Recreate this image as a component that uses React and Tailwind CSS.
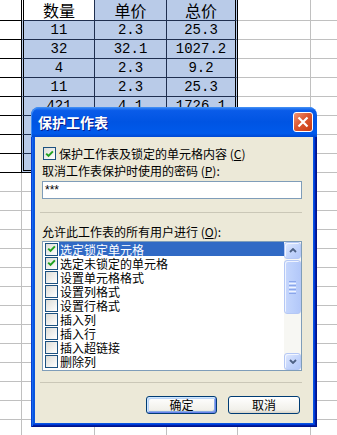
import React from "react";

const CJK = "font-['Noto_Sans_CJK_SC',sans-serif]";

const tableRows = [
  ["数量", "单价", "总价"],
  ["11", "2.3", "25.3"],
  ["32", "32.1", "1027.2"],
  ["4", "2.3", "9.2"],
  ["11", "2.3", "25.3"],
  ["421", "4.1", "1726.1"],
  ["", "", ""],
  ["", "", ""],
  ["", "", ""],
];

const items = [
  { t: "选定锁定单元格", c: true, sel: true },
  { t: "选定未锁定的单元格", c: true },
  { t: "设置单元格格式" },
  { t: "设置列格式" },
  { t: "设置行格式" },
  { t: "插入列" },
  { t: "插入行" },
  { t: "插入超链接" },
  { t: "删除列" },
];

function TableRow({ i, cells }) {
  const first = i === 0;
  const last = i === 8;
  const h = first ? "h-[21px]" : "h-[19px]";
  const bottom = last
    ? "border-b-[3px] border-b-black"
    : "border-b border-b-[#1f2f4f]";
  const bg = first ? "bg-white" : "bg-[#b9cbe8]";
  const txt = first
    ? `${CJK} text-[16px] leading-[20px]`
    : "font-['Liberation_Mono',monospace] text-[14px] leading-[18px]";
  return (
    <div className={`flex ${h}`}>
      <div className="w-[21px] border-b border-black bg-white" />
      <div
        className={`flex w-[74px] items-center justify-center border-double border-l-[3px] border-l-black border-r border-r-[#1f2f4f] ${bottom} ${bg} ${txt} text-black`}
      >
        {cells[0]}
      </div>
      <div
        className={`flex w-[72px] items-center justify-center border-double border-r border-r-[#1f2f4f] ${bottom} bg-[#b9cbe8] ${txt} text-black`}
      >
        {cells[1]}
      </div>
      <div
        className={`flex w-[71px] items-center justify-center border-double border-r-[3px] border-r-black ${bottom} bg-[#b9cbe8] ${txt} text-black`}
      >
        {cells[2]}
      </div>
      <div className="w-[73px] border-r border-b border-[#c0c0c0]" />
      <div className="flex-1 border-b border-[#c0c0c0]" />
    </div>
  );
}

function PlainRow() {
  return (
    <div className="flex h-[19px]">
      <div className="w-[22px] border-r border-b border-[#c0c0c0]" />
      <div className="w-[73px] border-r border-b border-[#c0c0c0]" />
      <div className="w-[72px] border-r border-b border-[#c0c0c0]" />
      <div className="w-[71px] border-r border-b border-[#c0c0c0]" />
      <div className="w-[73px] border-r border-b border-[#c0c0c0]" />
      <div className="flex-1 border-b border-[#c0c0c0]" />
    </div>
  );
}

function CheckBox({ checked }) {
  return (
    <div className="flex h-[13px] w-[13px] shrink-0 items-center justify-center border border-[#1c5180] bg-[linear-gradient(135deg,#dcdcd7,#ffffff)]">
      {checked && (
        <svg width="9" height="8" viewBox="0 0 9 8">
          <path d="M1.2 3.6 L3.5 5.9 L7.9 1.4" fill="none" stroke="#21a121" strokeWidth="2" />
        </svg>
      )}
    </div>
  );
}

function Arrow({ up }) {
  return (
    <svg width="8" height="5" viewBox="0 0 8 5">
      <path
        d={up ? "M1 4 L4 1 L7 4" : "M1 1 L4 4 L7 1"}
        fill="none"
        stroke="#4d6185"
        strokeWidth="1.8"
      />
    </svg>
  );
}

function ScrollBtn({ up }) {
  return (
    <div className="flex h-[17px] shrink-0 items-center justify-center rounded-[3px] border border-[#b5c8f5] bg-[linear-gradient(135deg,#e0e9fe,#c0d2fb_60%,#b3c8f9)] shadow-[inset_1px_1px_#f2f6ff]">
      <Arrow up={up} />
    </div>
  );
}

function XpButton({ children, def }) {
  return (
    <div
      className={`flex h-[18px] items-center justify-center rounded-[3px] border border-[#003c74] bg-[linear-gradient(180deg,#ffffff,#f1f0ea_80%,#d8d3c7)] text-[12px] leading-[14px] text-black ${
        def
          ? "w-[71px] shadow-[inset_1px_1px_#cee7ff,inset_-1px_-1px_#6982ee,inset_2px_2px_#bcd4f6,inset_-2px_-2px_#89ade4]"
          : "w-[72px]"
      }`}
    >
      {children}
    </div>
  );
}

export default function App() {
  return (
    <div className={`relative h-[435px] w-[337px] overflow-hidden bg-white ${CJK}`}>
      {/* Sheet */}
      <div className="flex flex-col">
        {tableRows.map((r, i) => (
          <TableRow key={i} i={i} cells={r} />
        ))}
        {Array.from({ length: 14 }).map((_, i) => (
          <PlainRow key={i} />
        ))}
      </div>

      {/* Dialog */}
      <div className="absolute left-[31px] top-[107px] flex h-[320px] w-[286px] flex-col">
        <div className="flex h-[30px] shrink-0 items-center rounded-t-[8px] bg-[linear-gradient(180deg,#3d8df6_0%,#0a5ce9_12%,#0054e3_50%,#005aeb_88%,#0048d2_100%)] pl-[7px] shadow-[inset_1px_1px_#3f8cf3]">
          <span className="text-[14px] font-bold leading-[18px] text-white [text-shadow:1px_1px_#0a1a8a]">
            保护工作表
          </span>
          <div className="ml-auto mr-[4px] flex h-[20px] w-[20px] items-center justify-center rounded-[3px] border border-white bg-[linear-gradient(135deg,#f09474,#dd5830_45%,#c63b14)]">
            <svg width="12" height="12" viewBox="0 0 12 12">
              <path d="M1.5 1.5 L10.5 10.5 M10.5 1.5 L1.5 10.5" stroke="#fff" strokeWidth="2.2" />
            </svg>
          </div>
        </div>

        <div className="flex flex-1 bg-[#0854e0] px-[4px] pb-[4px] shadow-[inset_1px_0_#0a3fd0,inset_-1px_0_#00138c,inset_0_-1px_#00138c,inset_2px_0_#166aee,inset_-2px_0_#001ea0,inset_0_-2px_#001ea0,inset_-3px_0_#003bda,inset_0_-3px_#003bda]">
          <div className="flex flex-1 flex-col bg-[#ece9d8] pl-[7px] pr-[11px] text-[12px] leading-[14px] text-black">
            <div className="mt-[10px] flex h-[13px] items-center">
              <div className="ml-[1px]">
                <CheckBox checked />
              </div>
              <span className="ml-[3px]">
                保护工作表及锁定的单元格内容 (<span className="underline">C</span>)
              </span>
            </div>

            <div className="mt-[4px] h-[14px]">
              取消工作表保护时使用的密码 (<span className="underline">P</span>):
            </div>

            <div className="mt-[3px] flex h-[18px] items-center border border-[#7f9db9] bg-white pl-[2px] font-['Liberation_Sans',sans-serif] text-[12px]">
              ***
            </div>

            <div className="mt-[13px] -ml-[2px] h-px w-[262px] bg-[#cac7b7]" />

            <div className="mt-[12px] h-[14px]">
              允许此工作表的所有用户进行 (<span className="underline">O</span>):
            </div>

            <div className="mt-[2px] flex h-[130px] border border-[#7f9db9] bg-white">
              <div className="flex flex-1 flex-col">
                {items.map((it) => (
                  <div key={it.t} className="flex h-[14px] shrink-0 items-center pl-[2px]">
                    <CheckBox checked={it.c} />
                    <div
                      className={`ml-[1px] flex h-full flex-1 items-center overflow-hidden pl-[1px] leading-[13px] ${
                        it.sel ? "bg-[#316ac5] text-white" : ""
                      }`}
                    >
                      {it.t}
                    </div>
                  </div>
                ))}
              </div>
              <div className="flex w-[17px] flex-col bg-[#f7f7f3]">
                <ScrollBtn up />
                <div className="mt-[1px] flex h-[54px] shrink-0 flex-col items-center justify-center gap-px rounded-[3px] border border-[#b5c8f5] bg-[linear-gradient(90deg,#c6d6fc,#bcd0fb_50%,#b3c8f9)] shadow-[inset_1px_1px_#eef3fe]">
                  <div className="h-px w-[7px] bg-[#8ba6ea]" />
                  <div className="h-px w-[7px] bg-[#eef3fe]" />
                  <div className="h-px w-[7px] bg-[#8ba6ea]" />
                  <div className="h-px w-[7px] bg-[#eef3fe]" />
                  <div className="h-px w-[7px] bg-[#8ba6ea]" />
                  <div className="h-px w-[7px] bg-[#eef3fe]" />
                  <div className="h-px w-[7px] bg-[#8ba6ea]" />
                </div>
                <div className="flex-1" />
                <ScrollBtn />
              </div>
            </div>

            <div className="mt-[11px] -ml-[2px] h-px w-[262px] bg-[#cac7b7]" />

            <div className="mt-[13px] flex justify-end gap-[11px] pr-[2px]">
              <XpButton def>确定</XpButton>
              <XpButton>取消</XpButton>
            </div>
          </div>
        </div>
      </div>
    </div>
  );
}
